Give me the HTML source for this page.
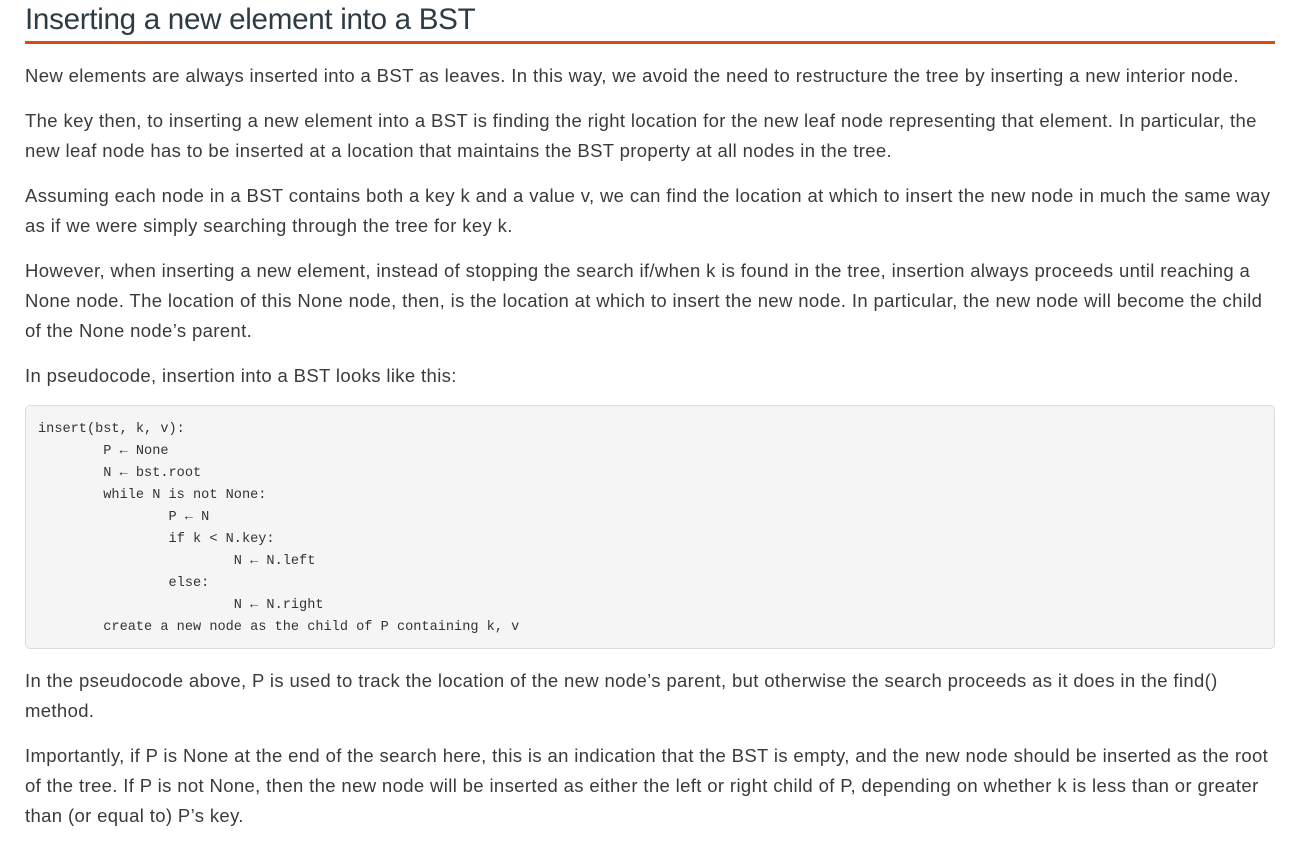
<!DOCTYPE html>
<html><head><meta charset="utf-8"><style>
html,body{margin:0;padding:0;background:#fff;width:1295px;height:841px;overflow:hidden}
body{font-family:"Liberation Sans",sans-serif;color:#3a3a3a}
h1{position:absolute;left:25px;top:1px;margin:0;font-weight:normal;font-size:29.6px;line-height:38px;color:#2d3b45;width:1250px;height:40px;border-bottom:3px solid #e0480f;letter-spacing:-0.3px}
.p{position:absolute;left:25px;font-size:18.5px;line-height:30px;white-space:nowrap;letter-spacing:0.36px}
pre{position:absolute;left:25px;top:405px;width:1250px;height:244px;margin:0;background:#f5f5f5;border:1px solid #dcdcdc;border-radius:5px;box-sizing:border-box;padding:13px 12px;font-family:"Liberation Mono",monospace;font-size:13.6px;line-height:22px;color:#333;tab-size:8}
</style></head><body>
<h1>Inserting a new element into a BST</h1>
<div class="p" style="top:61px">New elements are always inserted into a BST as leaves. In this way, we avoid the need to restructure the tree by inserting a new interior node.</div>
<div class="p" style="top:106px">The key then, to inserting a new element into a BST is finding the right location for the new leaf node representing that element. In particular, the<br>new leaf node has to be inserted at a location that maintains the BST property at all nodes in the tree.</div>
<div class="p" style="top:181px">Assuming each node in a BST contains both a key k and a value v, we can find the location at which to insert the new node in much the same way<br>as if we were simply searching through the tree for key k.</div>
<div class="p" style="top:256px">However, when inserting a new element, instead of stopping the search if/when k is found in the tree, insertion always proceeds until reaching a<br>None node. The location of this None node, then, is the location at which to insert the new node. In particular, the new node will become the child<br>of the None node’s parent.</div>
<div class="p" style="top:361px">In pseudocode, insertion into a BST looks like this:</div>
<pre>insert(bst, k, v):
	P ← None
	N ← bst.root
	while N is not None:
		P ← N
		if k &lt; N.key:
			N ← N.left
		else:
			N ← N.right
	create a new node as the child of P containing k, v</pre>
<div class="p" style="top:666px">In the pseudocode above, P is used to track the location of the new node’s parent, but otherwise the search proceeds as it does in the find()<br>method.</div>
<div class="p" style="top:741px">Importantly, if P is None at the end of the search here, this is an indication that the BST is empty, and the new node should be inserted as the root<br>of the tree. If P is not None, then the new node will be inserted as either the left or right child of P, depending on whether k is less than or greater<br>than (or equal to) P’s key.</div>
</body></html>
